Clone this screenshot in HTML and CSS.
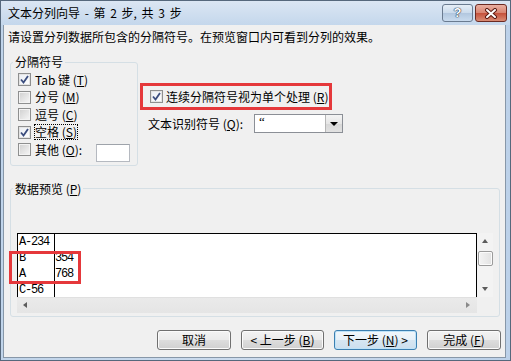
FILE: index.html
```html
<!DOCTYPE html>
<html lang="zh-CN">
<head>
<meta charset="utf-8">
<title>文本分列向导</title>
<link rel="stylesheet" href="styles.css">
</head>
<body>
<div class="window">
  <div class="titlebar">
    <span class="title">文本分列向导 - 第 2 步, 共 3 步</span>
    <div class="caption">
      <span class="cap help">?</span>
      <span class="cap close"><svg width="14" height="11" viewBox="0 0 14 11"><path d="M3 2 L11 9 M11 2 L3 9" stroke="#5a1a12" stroke-width="4" stroke-linecap="round"/><path d="M3 2 L11 9 M11 2 L3 9" stroke="#ffffff" stroke-width="2" stroke-linecap="round"/></svg></span>
    </div>
  </div>
  <div class="client">
    <p class="intro">请设置分列数据所包含的分隔符号。在预览窗口内可看到分列的效果。</p>
    <div class="top">
      <fieldset class="group delims">
        <legend>分隔符号</legend>
        <div class="row"><span class="cb"><svg viewBox="0 0 11 11"><path d="M2 5.5 L4.5 8.5 L9 2" fill="none" stroke="#3b4d7e" stroke-width="1.8"/></svg></span><span>Tab 键 (<u>T</u>)</span></div>
        <div class="row"><span class="cb off"></span><span>分号 (<u>M</u>)</span></div>
        <div class="row"><span class="cb off"></span><span>逗号 (<u>C</u>)</span></div>
        <div class="row"><span class="cb"><svg viewBox="0 0 11 11"><path d="M2 5.5 L4.5 8.5 L9 2" fill="none" stroke="#3b4d7e" stroke-width="1.8"/></svg></span><span class="focus">空格 (<u>S</u>)</span></div>
        <div class="row"><span class="cb off"></span><span>其他 (<u>O</u>):</span><span class="field"></span></div>
      </fieldset>
      <div class="opts">
        <div class="consec"><span class="cb"><svg viewBox="0 0 11 11"><path d="M2 5.5 L4.5 8.5 L9 2" fill="none" stroke="#3b4d7e" stroke-width="1.8"/></svg></span><span>连续分隔符号视为单个处理 (<u>R</u>)</span></div>
        <div class="qual">
          <span class="qlabel">文本识别符号 (<u>Q</u>):</span>
          <div class="combo"><span class="val">“</span><span class="drop"><span class="tri-down"></span></span></div>
        </div>
      </div>
    </div>
    <fieldset class="group pg">
      <legend>数据预览 (<u>P</u>)</legend>
      <div class="preview">
        <div class="data">
          <div class="col c1">
            <div class="cell">A-234</div>
            <div class="cell">B</div>
            <div class="cell">A</div>
            <div class="cell">C-56</div>
          </div>
          <div class="col c2">
            <div class="cell">&nbsp;</div>
            <div class="cell">354</div>
            <div class="cell">768</div>
            <div class="cell">&nbsp;</div>
          </div>
        </div>
        <div class="vscroll">
          <span class="sbtn up"><span class="tri-up"></span></span>
          <span class="thumb"></span>
          <span class="sbtn dn"><span class="tri-dn"></span></span>
        </div>
        <div class="hscroll"><span class="tri-left"></span><span class="tri-right"></span></div>
        <div class="corner"></div>
        <div class="mark"></div>
      </div>
    </fieldset>
    <div class="buttons">
      <span class="btn w74">取消</span>
      <span class="btn w83">&lt; 上一步 (<u>B</u>)</span>
      <span class="btn w83 default">下一步 (<u>N</u>) &gt;</span>
      <span class="btn w74">完成 (<u>F</u>)</span>
    </div>
  </div>
</div>
</body>
</html>
```
FILE: styles.css
```css
* { box-sizing: border-box; }

body {
  margin: 0;
  font-family: "Noto Sans CJK SC", "Liberation Sans", sans-serif;
  font-size: 12px;
  color: #000;
}

u { text-decoration: underline; text-underline-offset: 1px; }

.window {
  width: 511px;
  height: 361px;
  border: 1px solid #56687c;
  background: linear-gradient(90deg, #c0d4ea, #cddcee 50%, #bcd1e9);
  display: flex;
  flex-direction: column;
}

.titlebar {
  height: 24px;
  flex: none;
  background: linear-gradient(#dbe6f3, #c4d7ec);
  display: flex;
  align-items: center;
  justify-content: space-between;
  padding: 0 3px 0 7px;
}

.title { line-height: 14px; color: #000; word-spacing: 2px; }

.caption {
  display: flex;
  gap: 2px;
  align-self: flex-start;
  margin-top: 3px;
}

.cap {
  width: 31px;
  height: 18px;
  border: 1px solid #6a7b90;
  border-radius: 3px;
  display: flex;
  align-items: center;
  justify-content: center;
}

.help {
  background: linear-gradient(#e6eef7, #cbdbec 48%, #b2c7df 52%, #c9dbee);
  color: #fff;
  font-family: "Liberation Sans", sans-serif;
  font-weight: bold;
  font-size: 13px;
  line-height: 14px;
  text-shadow: 0 0 1px #24344a, 0 0 1px #24344a, 0 0 1px #24344a;
}

.close {
  width: 32px;
  border-color: #6b2a22;
  background: linear-gradient(#eab0a2, #d98572 48%, #c5523c 52%, #d98b74);
}

.client {
  flex: 1;
  margin: 0 4px 2px 2px;
  background: #f0f0f0;
  border: 1px solid #8797a8;
  border-top: none;
  display: flex;
  flex-direction: column;
}

.intro {
  margin: 5px 0 0 4px;
  line-height: 14px;
}

.top {
  display: flex;
  margin-top: 11px;
}

.group {
  margin: 0;
  border: 1px solid #d5dfe5;
  border-radius: 3px;
  min-inline-size: 0;
}

.group legend {
  padding: 0 2px;
  line-height: 14px;
}

.delims {
  margin-left: 6px;
  width: 128px;
  padding: 2px 7px 6px 7px;
}

.delims legend { margin-left: -5px; }

.row {
  height: 17.5px;
  display: flex;
  align-items: center;
  line-height: 14px;
  white-space: nowrap;
}

.cb {
  width: 13px;
  height: 13px;
  flex: none;
  margin-right: 4px;
  border: 1px solid #8e8f8f;
  background: linear-gradient(135deg, #e9edf3, #ffffff);
  box-shadow: inset 0 0 0 1px #e4e4e4;
  display: inline-flex;
}

.cb svg { width: 11px; height: 11px; }

.cb.off {
  background: linear-gradient(135deg, #cfcfcf, #f7f7f7);
  box-shadow: inset 0 0 0 1px #f3f3f3;
}

.focus { outline: 1px dotted #000; outline-offset: 0; }

.field {
  width: 34px;
  height: 18px;
  margin-left: auto;
  margin-top: 6px;
  background: #fff;
  border: 1px solid #b5b9c0;
  border-top-color: #9ea3aa;
}

.opts {
  margin-left: 2px;
  padding-top: 28px;
  display: flex;
  flex-direction: column;
}

.consec {
  width: 192px;
  height: 27px;
  border: 3px solid #e5383b;
  display: flex;
  align-items: center;
  padding-left: 7px;
  line-height: 14px;
  white-space: nowrap;
}

.consec .cb { margin-right: 3px; }

.qual {
  margin-top: 4px;
  height: 19px;
  display: flex;
  align-items: center;
  padding-left: 8px;
  line-height: 14px;
}

.qlabel { width: 106px; white-space: nowrap; }

.combo {
  width: 89px;
  height: 19px;
  background: #fff;
  border: 1px solid #8b8f96;
  display: flex;
}

.val {
  flex: 1;
  padding-left: 4px;
  line-height: 14px;
  font-family: "Liberation Serif", serif;
  font-size: 13px;
}

.drop {
  width: 17px;
  border-left: 1px solid #b6b6b6;
  background: linear-gradient(#f4f4f4, #e6e6e6 50%, #d6d6d6 50%, #e2e2e2);
  display: flex;
  align-items: center;
  justify-content: center;
}

.tri-down {
  width: 0; height: 0;
  border-left: 4px solid transparent;
  border-right: 4px solid transparent;
  border-top: 4px solid #000;
}

.pg {
  margin: 16px 0 0 6px;
  width: 490px;
  padding: 37px 6px 3px 6px;
}

.pg legend { margin-left: -4px; }

.preview {
  position: relative;
  display: grid;
  grid-template-columns: 460px 16px;
  grid-template-rows: 64px 16px;
}

.data {
  background: #fff;
  border: 1px solid #000;
  border-bottom: none;
  display: flex;
  overflow: hidden;
  font-family: "Liberation Mono", monospace;
  font-size: 12px;
  letter-spacing: -1.2px;
}

.col { height: 100%; }

.c1 {
  width: 37px;
  border-right: 1px solid #000;
  padding-left: 1px;
}

.cell {
  height: 16px;
  line-height: 17px;
  white-space: nowrap;
}

.vscroll {
  background: #f3f3f3;
  display: flex;
  flex-direction: column;
  align-items: center;
}

.sbtn {
  width: 16px;
  display: flex;
  align-items: center;
  justify-content: center;
}

.sbtn.up { height: 17px; }
.sbtn.dn { height: 16px; margin-top: auto; }

.thumb {
  width: 15px;
  height: 15px;
  margin-top: 1px;
  border: 1px solid #9b9b9b;
  border-radius: 2px;
  background: linear-gradient(90deg, #f4f4f4, #e2e2e2);
  box-shadow: inset 0 0 0 1px #fbfbfb;
}

.tri-up {
  width: 0; height: 0;
  border-left: 3.5px solid transparent;
  border-right: 3.5px solid transparent;
  border-bottom: 4px solid #5c5c5c;
}

.tri-dn {
  width: 0; height: 0;
  border-left: 3.5px solid transparent;
  border-right: 3.5px solid transparent;
  border-top: 4px solid #5c5c5c;
}

.hscroll {
  background: linear-gradient(#eaeaea, #e5e5e5);
  border-top: 1px solid #e0e0e0;
  display: flex;
  align-items: center;
  justify-content: space-between;
  padding: 0 7px 0 6px;
}

.tri-left {
  width: 0; height: 0;
  border-top: 3.5px solid transparent;
  border-bottom: 3.5px solid transparent;
  border-right: 4px solid #5c5c5c;
}

.tri-right {
  width: 0; height: 0;
  border-top: 3.5px solid transparent;
  border-bottom: 3.5px solid transparent;
  border-left: 4px solid #8a8a8a;
}

.corner { background: #f0f0f0; }

.mark {
  position: absolute;
  left: -8px;
  top: 18px;
  width: 72px;
  height: 33px;
  border: 3px solid #e5383b;
}

.buttons {
  display: flex;
  justify-content: flex-end;
  gap: 10px;
  margin: 13px 4px 0 0;
}

.btn {
  height: 20px;
  border: 1px solid #707070;
  border-radius: 3px;
  background: linear-gradient(#f3f3f3, #ebebeb 48%, #dddddd 52%, #d0d0d0);
  box-shadow: inset 0 0 0 1px #fbfbfb;
  display: flex;
  align-items: center;
  justify-content: center;
  line-height: 14px;
  white-space: nowrap;
}

.w74 { width: 74px; }
.w83 { width: 83px; }

.btn.default {
  border-color: #3c7fb1;
  background: linear-gradient(#f2f7fb, #e8f1f8 48%, #d6e6f2 52%, #cddfee);
  box-shadow: inset 0 0 0 1px #bfe3f8;
}
```
